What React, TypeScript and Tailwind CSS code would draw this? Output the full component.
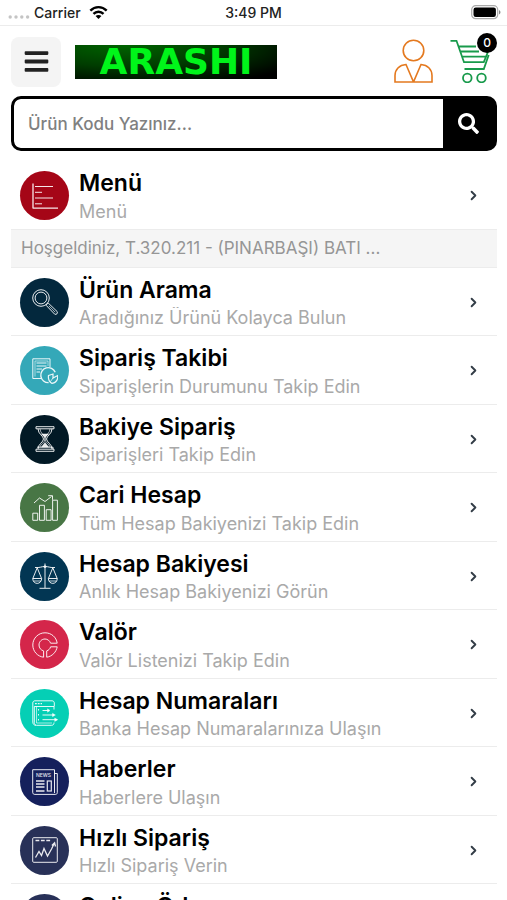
import React, { useState } from 'react';
import { FaBars, FaSearch } from 'react-icons/fa';
import { ChevronRight } from 'lucide-react';

const MenuLinesIcon = () => (
  <>
    <path d="M1 0.5V25.5M1 25.2H26" strokeWidth="1.3" />
    <path d="M3 3.5H21M3 9.3H10M3 15H21M3 20.8H10" />
  </>
);

const SearchLensIcon = () => (
  <>
    <circle cx="9" cy="9" r="8.3" />
    <circle cx="9" cy="9" r="5.9" />
    <path d="M14 16.2L16.2 14L25.2 22.6C26 24.3 24.4 26 22.7 25.2Z" />
    <path d="M16.8 16.8L23.2 23.2" strokeWidth="0.7" />
  </>
);

const OrderTrackIcon = () => (
  <>
    <path d="M9 20.5H0.8V0.8H18V9" />
    <path d="M3 18.5V3H16V8" strokeWidth="0.6" />
    <path d="M4.5 5H14.5M4.5 8H14.5M4.5 11H10M4.5 14H8" />
    <path d="M16.6 24.6A7.5 7.5 0 1 1 23.2 14.2" strokeWidth="1.4" />
    <path d="M16.5 17.5L21 16V20L25.8 17.5C26 22 23.5 24.8 20 25.4C17.5 24 16 21 16.5 17.5Z" strokeWidth="1.2" />
    <path d="M21 20L18.4 23.6" strokeWidth="0.8" />
  </>
);

const HourglassIcon = () => (
  <>
    <path d="M4 0.7H22V2.8H4ZM4 23.2H22V25.3H4ZM5 21.2H21V23.2" />
    <path d="M6 2.8C6 8 11.5 10 11.5 13S6 18 6 23M20 2.8C20 8 14.5 10 14.5 13S20 18 20 23" />
    <path d="M8 3C8 7 13 9.5 13 13S8.5 18 8 21M18 3C18 7 13 9.5 13 13S17.5 18 18 21" strokeWidth="0.7" />
    <path d="M9.5 8H16.5L13 11.5ZM9.5 21L13 16.5L16.5 21Z" fill="currentColor" strokeWidth="0.5" />
  </>
);

const ChartGrowthIcon = () => (
  <>
    <path d="M0.8 25.3V18.2H5.7V25.3ZM7.5 25.3V10.3H12.4V25.3ZM14.2 25.3V14.7H19.1V25.3ZM20.6 25.3V5.2H25.4V25.3Z" />
    <path d="M2 8L7.5 3L13 6.5L19.5 1.5M16.2 0.7H20.5V4.8" />
  </>
);

const ScalesIcon = () => (
  <>
    <path d="M13 0.5V25M7.5 25.3H18.5M3 4.5C8 5 9 3.5 13 3.5S18 5 23 4.5" />
    <path d="M5.2 4.8L0.8 15.5H9.6ZM20.8 4.8L16.4 15.5H25.2Z" />
    <path d="M0.7 15.5C1 22 9.4 22 9.7 15.5M16.3 15.5C16.6 22 25 22 25.3 15.5" />
    <path d="M1.5 18H9M17 18H24.5" strokeWidth="0.8" />
    <circle cx="13" cy="3.7" r="1" />
  </>
);

const ValorIcon = () => (
  <>
    <path d="M25.2 11.2C24.3 5 19.2 0.8 13 0.8C6.3 0.8 0.8 6.2 0.8 13C0.8 19.4 5.6 24.5 11.6 25.2V18.9C9 18.2 7 16 7 13C7 9.7 9.7 7 13 7C15.5 7 17.7 8.7 18.6 11.2Z" />
    <path d="M25.2 14.8C24.3 20 20.2 24.4 14.7 25.2V18.9C16.6 18.3 18 17 18.6 14.8Z" />
  </>
);

const AccountNumbersIcon = () => (
  <>
    <path d="M22 9.5V6.5H2.3V22.7C2.3 24 3 25 4.5 25.3H19.5C21.5 25.3 22 24 22 22.5M0.8 22V3C0.8 1.6 1.7 0.8 3 0.8H20C21.4 0.8 22.3 1.8 22.3 3V6.5M0.8 22C0.8 24 2 25.3 4 25.3" />
    <path d="M3 3.7H10" strokeDasharray="1.8 1" strokeWidth="1.3" />
    <path d="M6.5 9V10.5M6.5 14V15.5M6.5 19V20.5" />
    <path d="M4.5 6.5V23H20" strokeWidth="0.7" />
    <path d="M10.5 10.5H17M10.5 15H22M10.5 19.7H25" />
    <path d="M15.5 8.8L18 10.5L15.5 12.2ZM20.5 13.3L23.4 15L20.5 16.7ZM22.7 18L25.8 19.7L22.7 21.4Z" fill="currentColor" strokeWidth="0.4" />
  </>
);

const NewsIcon = () => (
  <>
    <path d="M22.5 4.5H25.3V23.5C25.3 24.8 24.5 25.4 23.4 25.4H2.8C1.5 25.4 0.7 24.6 0.7 23.3V0.7H22.5V24" />
    <text x="11.6" y="8" fontSize="5" fontWeight="500" textAnchor="middle" fill="currentColor" stroke="none">NEWS</text>
    <path d="M4 12H12.5M4 15H12.5M4 18H12.5M4 22H12.5" strokeWidth="1.3" />
    <rect x="15.3" y="12" width="4" height="10" strokeWidth="1.2" />
  </>
);

const QuickOrderIcon = () => (
  <>
    <rect x="0.7" y="0.7" width="24.6" height="24.6" rx="1" />
    <path d="M3.5 3.5H19" strokeDasharray="3.8 1.6" strokeWidth="1.3" />
    <path d="M3.5 20.5L7 14.5L9.5 18.5L12 11.5L15.5 19L19.5 12L22.5 6M19.9 8.5L22.6 5.7L23.5 9.5" strokeWidth="1.3" />
  </>
);

const menuItems = [
  { title: 'Ürün Arama', subtitle: 'Aradığınız Ürünü Kolayca Bulun', color: 'bg-[#03283d]', icon: SearchLensIcon },
  { title: 'Sipariş Takibi', subtitle: 'Siparişlerin Durumunu Takip Edin', color: 'bg-[#34a8b8]', icon: OrderTrackIcon },
  { title: 'Bakiye Sipariş', subtitle: 'Siparişleri Takip Edin', color: 'bg-[#021925]', icon: HourglassIcon },
  { title: 'Cari Hesap', subtitle: 'Tüm Hesap Bakiyenizi Takip Edin', color: 'bg-[#487645]', icon: ChartGrowthIcon },
  { title: 'Hesap Bakiyesi', subtitle: 'Anlık Hesap Bakiyenizi Görün', color: 'bg-[#023653]', icon: ScalesIcon },
  { title: 'Valör', subtitle: 'Valör Listenizi Takip Edin', color: 'bg-[#d4264a]', icon: ValorIcon },
  { title: 'Hesap Numaraları', subtitle: 'Banka Hesap Numaralarınıza Ulaşın', color: 'bg-[#05cfb5]', icon: AccountNumbersIcon },
  { title: 'Haberler', subtitle: 'Haberlere Ulaşın', color: 'bg-[#15205c]', icon: NewsIcon },
  { title: 'Hızlı Sipariş', subtitle: 'Hızlı Sipariş Verin', color: 'bg-[#283158]', icon: QuickOrderIcon },
  { title: 'Online Ödeme', subtitle: 'Online Ödeme Yapın', color: 'bg-[#283158]', icon: QuickOrderIcon },
];

type MenuRowProps = {
  title: string;
  subtitle: string;
  color: string;
  icon: React.ComponentType;
};

const MenuRow = ({ title, subtitle, color, icon: Icon }: MenuRowProps) => (
  <a href="#" className="flex items-center border-b border-[#ececec] pt-[5px] pr-4 pb-[3px] pl-[9px]">
    <span className={`flex h-[49px] w-[49px] shrink-0 items-center justify-center rounded-full text-white/90 ${color}`}>
      <svg viewBox="0 0 26 26" className="h-[26px] w-[26px]" fill="none" stroke="currentColor" strokeWidth="1" aria-hidden="true">
        <Icon />
      </svg>
    </span>
    <span className="ml-[10px] min-w-0 flex-1 pb-[3px]">
      <span className="block truncate text-[23px] leading-normal font-semibold text-black">{title}</span>
      <span className="block truncate text-[18px] leading-[22px] text-[#a9a9a9]">{subtitle}</span>
    </span>
    <ChevronRight className="h-[15px] w-[15px] shrink-0 text-[#333d47]" strokeWidth={3} />
  </a>
);

const StatusBar = () => (
  <div className="grid h-[26px] shrink-0 grid-cols-3 items-center border-b border-[#ececec] px-2 text-sm font-medium text-[#222]">
    <div className="flex items-center gap-1">
      <svg viewBox="0 0 22 6" className="mt-2 h-[6px] w-[22px]" fill="#c4c4c4" aria-hidden="true">
        <circle cx="2.2" cy="3" r="1.7" />
        <circle cx="8" cy="3" r="1.7" />
        <circle cx="13.8" cy="3" r="1.7" />
        <circle cx="19.6" cy="3" r="1.7" />
      </svg>
      <span>Carrier</span>
      <svg viewBox="0 0 20 15" className="ml-1 h-[15px] w-[19px]" fill="none" stroke="#000" strokeWidth="2.5" aria-hidden="true">
        <path d="M1.4 5.6C6.3 0.6 13.7 0.6 18.6 5.6" />
        <path d="M4.7 9C7.7 5.9 12.3 5.9 15.3 9" />
        <path d="M10 14.4L6.9 11.3C8.6 9.6 11.4 9.6 13.1 11.3Z" fill="#000" stroke="none" />
      </svg>
    </div>
    <div className="text-center">3:49 PM</div>
    <svg viewBox="0 0 30 15" className="h-[15px] w-[30px] translate-x-[2px] justify-self-end" aria-hidden="true">
      <rect x="0.7" y="0.7" width="26" height="13" rx="4" fill="none" stroke="#aaa" strokeWidth="1.2" />
      <rect x="2.5" y="2.5" width="22.4" height="9.4" rx="2.2" fill="#000" />
      <path d="M28 5V9.5C30 8.5 30 6 28 5Z" fill="#888" />
    </svg>
  </div>
);

const Header = () => (
  <header className="flex items-center px-[11px] pt-[11px]">
    <button type="button" aria-label="Menü" className="flex h-[50px] w-[50px] items-center justify-center rounded-lg bg-[#f4f4f4] pb-[2px] text-[#222]">
      <FaBars className="h-[27px] w-[27px]" />
    </button>
    <a
      href="#"
      className="ml-[14px] flex h-[34px] w-[202px] items-center justify-center bg-[radial-gradient(ellipse_at_25%_0%,#006400_0%,#003c00_45%,#000_90%)] font-['DejaVu_Sans',sans-serif] text-[36px] leading-none font-bold text-[#00f51a]"
    >
      ARASHI
    </a>
    <a href="#" aria-label="Hesabım" className="ml-auto pb-[2px]">
      <svg viewBox="0 0 39 44" className="h-11 w-[39px]" fill="none" stroke="#e4791f" strokeWidth="1.6" aria-hidden="true">
        <circle cx="19.5" cy="11.5" r="10.3" />
        <path d="M12 25.5L19.5 43H1V36.5C1 30.5 5.2 26 12 25.5ZM27 25.5L19.5 43H38V36.5C38 30.5 33.8 26 27 25.5Z" />
      </svg>
    </a>
    <a href="#" aria-label="Sepetim" className="relative mr-[6px] ml-[17px] pb-[2px]">
      <svg viewBox="0 0 40 44" className="h-11 w-10" fill="none" stroke="#189a4b" strokeWidth="1.8" aria-hidden="true">
        <path d="M0.5 1.8H6.5L14 23.2H33.8L38.5 11.5M8.5 7.5H26M10 12.5H29M12 17.7H36.5M14.5 30H33.8L38.7 16" />
        <circle cx="17.3" cy="39" r="4.3" />
        <circle cx="31.5" cy="39" r="4.3" />
      </svg>
      <span className="absolute -top-[6px] -right-[7px] flex h-5 w-5 items-center justify-center rounded-full bg-black text-xs font-medium text-white">
        0
      </span>
    </a>
  </header>
);

const App = () => {
  const [code, setCode] = useState('');

  return (
    <div className="flex h-screen flex-col bg-white font-['Inter',sans-serif]">
      <StatusBar />
      <div className="min-h-0 flex-1 overflow-y-auto [scrollbar-width:none]">
        <Header />

        <form
          className="mr-[10px] ml-[11px] mt-[9px] flex h-[55px] overflow-hidden rounded-[10px] border-[3px] border-black bg-black"
          onSubmit={(e) => e.preventDefault()}
        >
          <input
            type="text"
            aria-label="Ürün Kodu"
            placeholder="Ürün Kodu Yazınız..."
            value={code}
            onChange={(e) => setCode(e.target.value)}
            className="min-w-0 flex-1 rounded-l-md bg-white px-[14px] pt-[2px] text-[17px] font-medium text-black outline-none placeholder:text-[#808080]"
          />
          <button type="submit" aria-label="Ara" className="flex w-[51px] items-center justify-center text-white">
            <FaSearch className="h-[21px] w-[21px]" />
          </button>
        </form>

        <nav className="mr-[10px] ml-[11px] mt-[10px]">
          <MenuRow title="Menü" subtitle="Menü" color="bg-[#a50617]" icon={MenuLinesIcon} />
          <p className="truncate border-b border-[#ececec] bg-[#f5f5f5] px-[10px] py-[6px] text-[17px] leading-[25px] text-[#969696]">
            Hoşgeldiniz, T.320.211 - (PINARBAŞI) BATI ...
          </p>
          {menuItems.map((item) => (
            <MenuRow key={item.title} {...item} />
          ))}
        </nav>
      </div>
    </div>
  );
};

export default App;
